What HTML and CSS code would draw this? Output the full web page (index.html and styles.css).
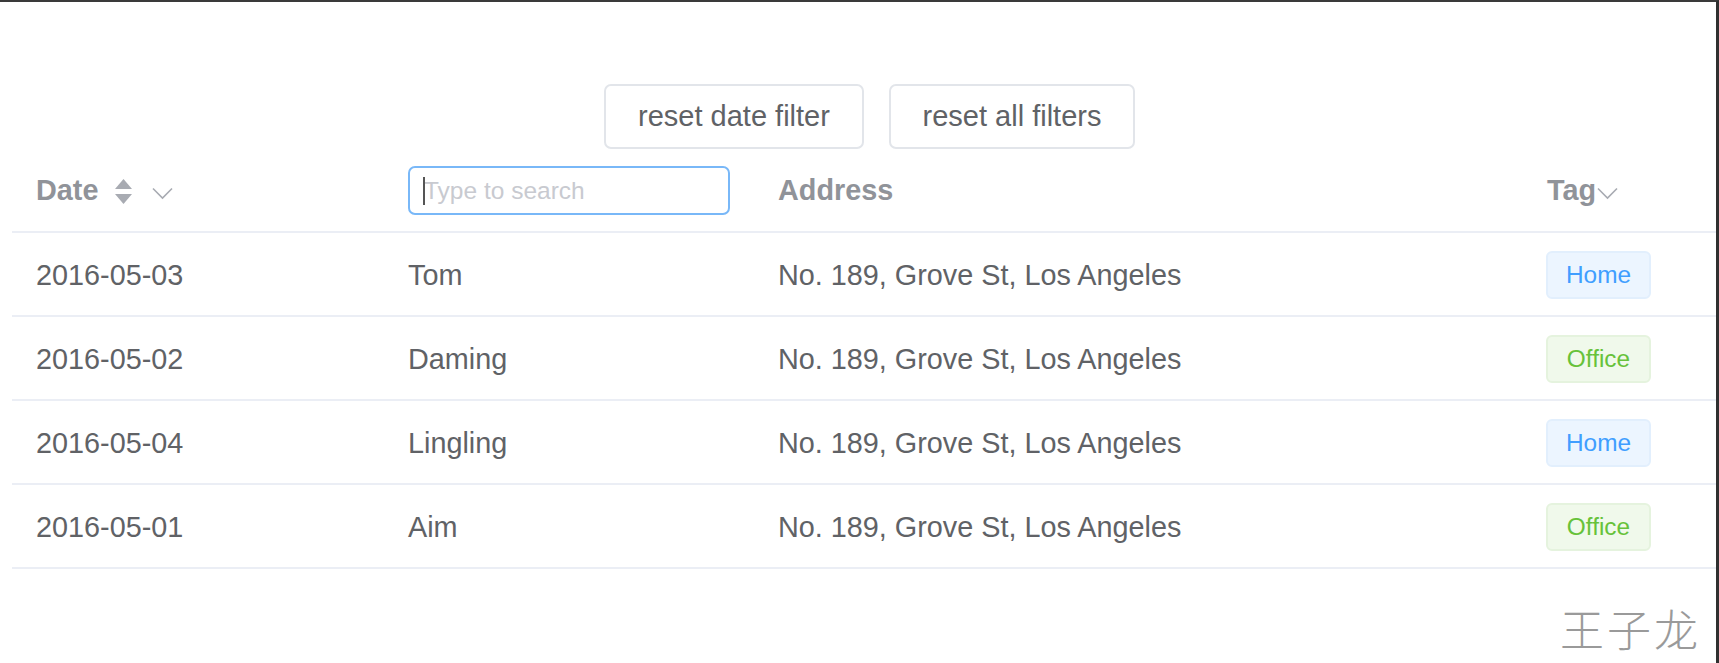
FILE: index.html
```html
<!DOCTYPE html>
<html lang="en">
<head>
<meta charset="utf-8">
<title>Table filters</title>
<link rel="stylesheet" href="styles.css">
</head>
<body>
<div class="frame">
  <div class="toolbar">
    <button class="btn btn-date">reset date filter</button>
    <button class="btn btn-all">reset all filters</button>
  </div>
  <div class="table">
    <div class="row head">
      <div class="cell">
        <span class="th">Date</span>
        <span class="sort">
          <svg width="19" height="25" viewBox="0 0 19 25"><path d="M9.5 0 L18 10 L1 10 Z" fill="#a8abb2"/><path d="M1 15 L18 15 L9.5 25 Z" fill="#a8abb2"/></svg>
        </span>
        <span class="chev">
          <svg width="21" height="13" viewBox="0 0 21 13"><path d="M1 1.5 L10.5 11 L20 1.5" fill="none" stroke="#a8abb2" stroke-width="1.6"/></svg>
        </span>
      </div>
      <div class="cell">
        <div class="search">
          <input class="search-input" type="text" placeholder="Type to search">
          <span class="caret"></span>
        </div>
      </div>
      <div class="cell"><span class="th">Address</span></div>
      <div class="cell">
        <span class="th">Tag</span>
        <span class="chev chev-tag">
          <svg width="21" height="13" viewBox="0 0 21 13"><path d="M1 1.5 L10.5 11 L20 1.5" fill="none" stroke="#a8abb2" stroke-width="1.6"/></svg>
        </span>
      </div>
    </div>
    <div class="row">
      <div class="cell">2016-05-03</div>
      <div class="cell">Tom</div>
      <div class="cell">No. 189, Grove St, Los Angeles</div>
      <div class="cell"><span class="tag tag-home">Home</span></div>
    </div>
    <div class="row">
      <div class="cell">2016-05-02</div>
      <div class="cell">Daming</div>
      <div class="cell">No. 189, Grove St, Los Angeles</div>
      <div class="cell"><span class="tag tag-office">Office</span></div>
    </div>
    <div class="row">
      <div class="cell">2016-05-04</div>
      <div class="cell">Lingling</div>
      <div class="cell">No. 189, Grove St, Los Angeles</div>
      <div class="cell"><span class="tag tag-home">Home</span></div>
    </div>
    <div class="row">
      <div class="cell">2016-05-01</div>
      <div class="cell">Aim</div>
      <div class="cell">No. 189, Grove St, Los Angeles</div>
      <div class="cell"><span class="tag tag-office">Office</span></div>
    </div>
  </div>
  <div class="watermark">王子龙</div>
</div>
</body>
</html>
```
FILE: styles.css
```css
html, body {
  margin: 0;
  padding: 0;
  background: #ffffff;
}
body {
  font-family: "Liberation Sans", Arial, sans-serif;
  color: #606266;
}
.frame {
  position: relative;
  width: 1719px;
  height: 663px;
  box-sizing: border-box;
  border-top: 2px solid #3a3a3a;
  border-right: 3px solid #303030;
  padding: 82px 0 0 12px;
  overflow: hidden;
}
.toolbar {
  display: flex;
  gap: 25px;
  padding-left: 592px;
  height: 65px;
}
.btn {
  box-sizing: border-box;
  height: 65px;
  background: #fff;
  border: 2px solid #e2e5ea;
  border-radius: 7px;
  color: #606266;
  font-family: "Liberation Sans", Arial, sans-serif;
  font-size: 29px;
  padding: 0;
  margin: 0;
}
.btn-date { width: 260px; }
.btn-all { width: 246px; }
.table {
  width: 1704px;
}
.row {
  display: grid;
  grid-template-columns: 372px 370px 769px 193px;
  height: 84px;
  box-sizing: border-box;
  border-bottom: 2px solid #ebeef5;
  align-items: center;
  font-size: 28.8px;
}
.cell {
  padding-left: 24px;
  display: flex;
  align-items: center;
  white-space: nowrap;
  padding-top: 2px;
}
.head .cell {
  color: #909399;
  font-weight: bold;
  padding-top: 0;
}
.sort {
  display: inline-flex;
  margin-left: 16px;
  margin-top: 2px;
}
.chev {
  display: inline-flex;
  margin-left: 19px;
  margin-top: 6px;
}
.chev-tag {
  margin-left: 1px;
}
.search {
  position: relative;
  display: flex;
}
.search-input {
  box-sizing: border-box;
  width: 322px;
  height: 49px;
  border: 2px solid #79b8f8;
  border-radius: 7px;
  outline: none;
  padding: 2px 0 0 14px;
  font-family: "Liberation Sans", Arial, sans-serif;
  font-size: 24.5px;
  color: #606266;
  background: #fff;
  margin-top: 0;
}
.search-input::placeholder {
  color: #c8cad0;
}
.caret {
  position: absolute;
  left: 15px;
  top: 11px;
  width: 2px;
  height: 28px;
  background: #555;
}
.tag {
  box-sizing: border-box;
  display: inline-flex;
  align-items: center;
  justify-content: center;
  width: 105px;
  height: 48px;
  border-radius: 6px;
  font-size: 24.4px;
  margin-left: -1px;
}
.tag-home {
  background: #ecf5ff;
  border: 2px solid #e2effd;
  color: #409eff;
}
.tag-office {
  background: #f0f9eb;
  border: 2px solid #e5f3de;
  color: #67c23a;
}
.watermark {
  position: absolute;
  right: 15px;
  top: 600px;
  font-family: "Noto Sans CJK SC", sans-serif;
  font-weight: 300;
  font-size: 44px;
  letter-spacing: 3px;
  color: #9a9a9a;
  line-height: 1.2;
}
```
